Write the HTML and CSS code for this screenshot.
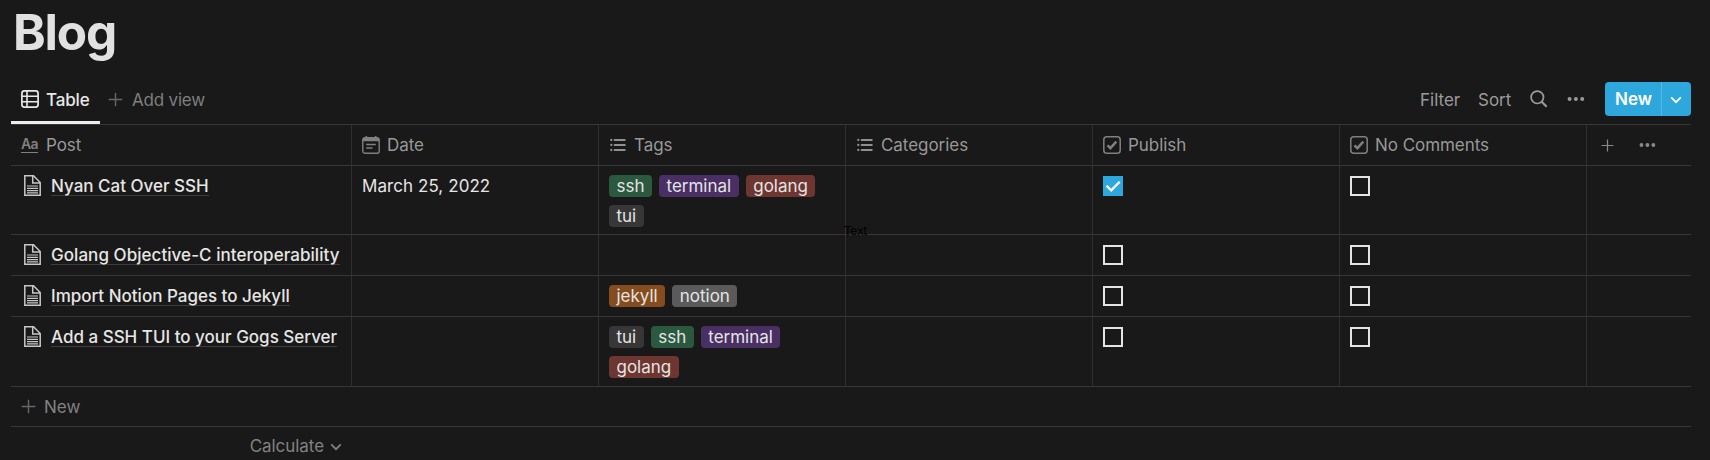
FILE: index.html
```html
<!DOCTYPE html>
<html lang="en">
<head>
<meta charset="utf-8">
<title>Blog</title>
<link rel="stylesheet" href="styles.css">
</head>
<body>
<svg class="defs" width="0" height="0">
  <symbol id="plus" viewBox="0 0 16 16"><path d="M8 .7v14.6M.7 8h14.6" fill="none" stroke="currentColor" stroke-width="1.5"/></symbol>
  <symbol id="dots" viewBox="0 0 18 6"><g fill="currentColor"><circle cx="2.6" cy="3" r="2"/><circle cx="8.9" cy="3" r="2"/><circle cx="15.2" cy="3" r="2"/></g></symbol>
  <symbol id="chevron" viewBox="0 0 12 8"><path d="M1.2 1.4 6 6.2l4.800-4.800" fill="none" stroke="currentColor" stroke-width="1.7"/></symbol>
  <symbol id="list" viewBox="0 0 16 14"><path d="M4.600 2h10.200M4.600 7h10.200M4.600 12h10.200" fill="none" stroke="currentColor" stroke-width="1.9" stroke-linecap="round"/><g fill="currentColor"><circle cx="1.300" cy="2" r="1.150"/><circle cx="1.300" cy="7" r="1.150"/><circle cx="1.300" cy="12" r="1.150"/></g></symbol>
  <symbol id="check" viewBox="0 0 18 18"><rect x=".8" y=".8" width="16.400" height="16.400" rx="3" fill="none" stroke="currentColor" stroke-width="1.500"/><path d="M4.500 9.300 7.400 12.100 13.300 5.600" fill="none" stroke="currentColor" stroke-width="2.500"/></symbol>
  <symbol id="doc" viewBox="0 0 17 21"><path d="M.8.8h8.700l6.700 6.700v12.700H.8zM8.700.8v7.300h7.500" fill="none" stroke="currentColor" stroke-width="1.500"/><path d="M3 11h11M3 13.300h11M3 15.600h11M3 17.900h11" fill="none" stroke="currentColor" stroke-width="1.200"/></symbol>
</svg>
<main class="page">
  <h1 class="title">Blog</h1>
  <div class="toolbar">
    <div class="tab">
      <svg class="tab-icon" viewBox="0 0 18 18"><rect x=".9" y=".9" width="16.200" height="16.200" rx="2.500" fill="none" stroke="currentColor" stroke-width="1.700"/><path d="M1 6.300h16M1 11.700h16M6 1v16" fill="none" stroke="currentColor" stroke-width="1.600"/></svg>
      <span class="tab-label">Table</span>
    </div>
    <div class="add-view"><svg class="plus"><use href="#plus"/></svg><span>Add view</span></div>
    <div class="actions">
      <span class="filter">Filter</span>
      <span class="sort">Sort</span>
      <svg class="search" viewBox="0 0 18 18"><circle cx="7.300" cy="7.300" r="6.200" fill="none" stroke="currentColor" stroke-width="1.700"/><path d="m11.700 11.700 5 5" stroke="currentColor" stroke-width="2.100"/></svg>
      <svg class="dots"><use href="#dots"/></svg>
      <div class="new-button"><span class="new-label">New</span><span class="new-more"><svg class="chevron"><use href="#chevron"/></svg></span></div>
    </div>
  </div>
  <div class="row head">
    <div class="cell"><span class="aa">Aa</span><span>Post</span></div>
    <div class="cell"><svg class="calendar" viewBox="0 0 18 18"><path d="M2.800 1.800h12.400a2 2 0 0 1 2 2v11.400a2 2 0 0 1-2 2H2.800a2 2 0 0 1-2-2V3.800a2 2 0 0 1 2-2z" fill="none" stroke="currentColor" stroke-width="1.400"/><path d="M1 2h16v3.300H1zM3.500 0h1.600v3H3.500zM12.900 0h1.600v3h-1.600z" fill="currentColor"/><path d="M4.200 8.500h9.600M4.200 12h6.300" stroke="currentColor" stroke-width="1.500"/></svg><span>Date</span></div>
    <div class="cell"><svg class="list"><use href="#list"/></svg><span>Tags</span></div>
    <div class="cell"><svg class="list"><use href="#list"/></svg><span>Categories</span></div>
    <div class="cell"><svg class="check"><use href="#check"/></svg><span>Publish</span></div>
    <div class="cell"><svg class="check"><use href="#check"/></svg><span>No Comments</span></div>
    <div class="cell tools"><svg class="plus-small"><use href="#plus"/></svg><svg class="dots-small"><use href="#dots"/></svg></div>
  </div>
  <div class="row first">
    <div class="cell"><svg class="doc"><use href="#doc"/></svg><span class="name">Nyan Cat Over SSH</span></div>
    <div class="cell"><span class="date">March 25, 2022</span></div>
    <div class="cell"><div class="tags"><span class="tag green">ssh</span><span class="tag purple">terminal</span><span class="tag red">golang</span><span class="tag gray">tui</span></div></div>
    <div class="cell"><span class="floating-label">Text</span></div>
    <div class="cell"><span class="box checked"><svg class="tick" viewBox="0 0 20 20"><path d="m3.500 9.800 4.700 4.600 8.500-8.700" fill="none" stroke="#fff" stroke-width="2.300"/></svg></span></div>
    <div class="cell"><span class="box"></span></div>
    <div class="cell"></div>
  </div>
  <div class="row">
    <div class="cell"><svg class="doc"><use href="#doc"/></svg><span class="name wide">Golang Objective-C interoperability</span></div>
    <div class="cell"></div><div class="cell"></div><div class="cell"></div>
    <div class="cell"><span class="box"></span></div>
    <div class="cell"><span class="box"></span></div>
    <div class="cell"></div>
  </div>
  <div class="row">
    <div class="cell"><svg class="doc"><use href="#doc"/></svg><span class="name">Import Notion Pages to Jekyll</span></div>
    <div class="cell"></div>
    <div class="cell"><div class="tags"><span class="tag orange">jekyll</span><span class="tag light">notion</span></div></div>
    <div class="cell"></div>
    <div class="cell"><span class="box"></span></div>
    <div class="cell"><span class="box"></span></div>
    <div class="cell"></div>
  </div>
  <div class="row last">
    <div class="cell"><svg class="doc"><use href="#doc"/></svg><span class="name">Add a SSH TUI to your Gogs Server</span></div>
    <div class="cell"></div>
    <div class="cell"><div class="tags"><span class="tag gray">tui</span><span class="tag green">ssh</span><span class="tag purple">terminal</span><span class="tag red">golang</span></div></div>
    <div class="cell"></div>
    <div class="cell"><span class="box"></span></div>
    <div class="cell"><span class="box"></span></div>
    <div class="cell"></div>
  </div>
  <div class="new-row"><svg class="plus"><use href="#plus"/></svg><span>New</span></div>
  <div class="calc"><span>Calculate</span><svg class="chevron"><use href="#chevron"/></svg></div>
</main>
</body>
</html>
```
FILE: styles.css
```css
* { box-sizing: border-box; }
body {
  margin: 0;
  height: 460px;
  overflow: hidden;
  background: #191919;
  color: #e6e6e5;
  font: 17px/22px Inter, "Liberation Sans", sans-serif;
}
svg { display: block; flex: none; }
span { white-space: nowrap; }
.defs { position: absolute; }
.page { padding: 0 19px 0 11px; }
.title {
  margin: 0;
  height: 76px;
  padding: 2px 0 0 2px;
  font-size: 49.5px;
  line-height: 60px;
  font-weight: 700;
  letter-spacing: -1.2px;
  color: #e1e1e1;
}
.toolbar {
  display: flex;
  height: 49px;
  border-bottom: 1px solid #373737;
  color: #9b9b9b;
}
.tab {
  display: flex;
  width: 89px;
  height: 48px;
  padding: 13px 0 0 10px;
  gap: 7px;
  border-bottom: 3px solid #eeeeee;
  color: #e8e8e8;
  font-weight: 500;
}
.tab-label { letter-spacing: -0.15px; }
.tab-icon { width: 18px; height: 18px; margin-top: 1px; }
.add-view { display: flex; gap: 9px; padding: 13px 0 0 8px; color: #7f7f7f; letter-spacing: -0.2px; }
.plus { width: 15px; height: 15px; margin-top: 3px; color: #686868; }
.actions { display: flex; margin-left: auto; padding-top: 13px; }
.filter { width: 58px; }
.sort { width: 52px; }
.search { width: 18px; height: 18px; margin: 1px 19px 0 0; }
.dots { width: 18px; height: 6px; margin: 7px 20px 0 0; }
.new-button {
  display: flex;
  width: 86px;
  height: 34px;
  margin-top: -7px;
  border-radius: 4px;
  background: #2ea8dc;
  color: #fff;
  font-weight: 600;
}
.new-label { width: 57px; padding: 6px 0 0 10px; border-right: 1px solid #58bae4; }
.new-more { padding: 14px 0 0 8px; }
.chevron { width: 12px; height: 8px; }
.row {
  display: grid;
  grid-template-columns: 341px repeat(5, 247px) 104px;
  height: 41px;
  border-bottom: 1px solid #373737;
}
.row.first { height: 69px; }
.row.last { height: 70px; }
.cell { display: flex; position: relative; padding: 9px 0 0 10px; border-right: 1px solid #303030; }
.cell:last-child { border-right: 0; }
.head { color: #989898; }
.head .cell { align-items: center; padding-top: 0; letter-spacing: -0.05px; }
.aa { width: 17px; height: 15px; margin-right: 8px; border-bottom: 1px solid #808080; color: #808080; font-size: 14px; line-height: 12px; font-weight: 600; letter-spacing: -0.6px; }
.calendar { width: 18px; height: 18px; margin-right: 7px; color: #808080; }
.list { width: 16px; height: 14px; margin: 0 8px 0 1px; color: #909090; }
.check { width: 18px; height: 18px; margin: 0 7px 0 0; color: #808080; }
.head .tools { padding-left: 14px; }
.plus-small { width: 13px; height: 13px; margin-right: 25px; color: #8a8a8a; }
.dots-small { width: 17px; height: 6px; color: #8a8a8a; }
.doc { width: 17px; height: 21px; margin: 0 10px 0 3px; color: #c8c8c8; }
.name { height: 20px; margin-top: 1px; line-height: 21px; border-bottom: 1px solid #3d3d3d; font-weight: 500; }
.wide { letter-spacing: 0.05px; }
.date { letter-spacing: 0.07px; }
.tags { display: flex; flex-wrap: wrap; align-content: flex-start; gap: 8px 7px; }
.tag { height: 22px; padding: 0 7.500px; border-radius: 4px; color: #e4e4e4; line-height: 22px; }
.green { background: #2b593f; }
.purple { background: #492f64; }
.red { background: #6e3630; }
.gray { background: #373737; }
.orange { background: #854c1d; }
.light { background: #5a5a5a; }
.box { width: 20px; height: 20px; margin: 1px 0 0; border: 2px solid #e4e4e4; }
.checked { border: 0; background: #2ea8dc; }
.tick { width: 20px; height: 20px; }
.floating-label { position: absolute; left: -2px; top: 57px; color: #000; font: 12.5px/16px "Liberation Sans", sans-serif; }
.new-row { display: flex; gap: 8px; height: 40px; padding: 9px 0 0 10px; border-bottom: 1px solid #373737; color: #828282; }
.calc { display: flex; gap: 6px; width: 341px; padding: 8px 10px 0 0; justify-content: flex-end; color: #828282; letter-spacing: -0.05px; }
.calc .chevron { margin-top: 8px; }
```
